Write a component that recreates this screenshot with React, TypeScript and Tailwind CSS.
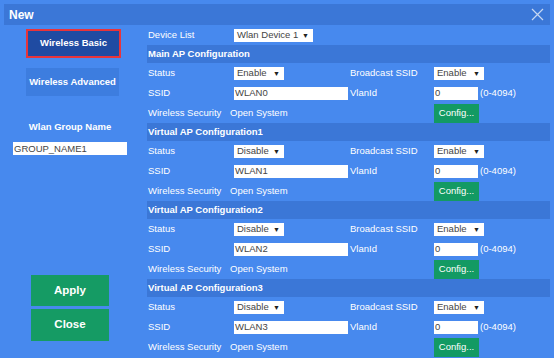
import React from 'react'

const font = { fontFamily: '"Liberation Sans", Arial, sans-serif' }

type Section = {
  title: string
  status: string
  ssid: string
}

const sections: Section[] = [
  { title: 'Main AP Configuration', status: 'Enable', ssid: 'WLAN0' },
  { title: 'Virtual AP Configuration1', status: 'Disable', ssid: 'WLAN1' },
  { title: 'Virtual AP Configuration2', status: 'Disable', ssid: 'WLAN2' },
  { title: 'Virtual AP Configuration3', status: 'Disable', ssid: 'WLAN3' },
]

function Select({ value, wide }: { value: string; wide?: boolean }) {
  return (
    <div
      className={`flex h-[13px] items-center justify-between bg-white pl-[3px] pr-[4px] text-[#444] ${
        wide ? 'w-[79px]' : 'w-[50px]'
      }`}
    >
      <span className="leading-none">{value}</span>
      <span className="text-[7px] leading-none text-[#222]">▼</span>
    </div>
  )
}

function TextBox({ value, className }: { value: string; className: string }) {
  return (
    <div className={`flex h-[13px] items-center bg-white pl-[1px] text-[#444] ${className}`}>
      <span className="leading-none">{value}</span>
    </div>
  )
}

function ApSection({ s }: { s: Section }) {
  return (
    <div>
      <div className="flex h-[18px] items-center bg-[#3b77d7] pl-[1px] font-bold text-white">{s.title}</div>
      <div className="grid h-[20px] grid-cols-[87px_116px_84px_1fr] items-center">
        <span className="pl-[1px]">Status</span>
        <Select value={s.status} />
        <span>Broadcast SSID</span>
        <Select value="Enable" />
      </div>
      <div className="grid h-[20px] grid-cols-[87px_116px_84px_1fr] items-center">
        <span className="pl-[1px]">SSID</span>
        <TextBox value={s.ssid} className="w-[114px]" />
        <span>VlanId</span>
        <div className="flex items-center gap-[2px]">
          <TextBox value="0" className="w-[44px]" />
          <span>(0-4094)</span>
        </div>
      </div>
      <div className="grid h-[20px] grid-cols-[87px_116px_84px_1fr] items-end">
        <span className="self-center whitespace-nowrap pl-[1px]">Wireless Security</span>
        <span className="-ml-[4px] self-center">Open System</span>
        <span />
        <button className="flex h-[19px] w-[45px] items-center justify-center bg-[#139a63] text-white">
          Config...
        </button>
      </div>
    </div>
  )
}

export default function App() {
  return (
    <div className="h-[358px] w-[554px] overflow-hidden bg-[#4789ee] px-[4px] pt-[4px] text-[9.5px] text-white" style={font}>
      <div className="flex h-[21px] items-center justify-between bg-[#3b77d7] pl-[5px] pr-[5px]">
        <span className="text-[12px] font-bold">New</span>
        <svg width="13" height="13" viewBox="0 0 13 13" className="mr-[1px]">
          <path d="M1 1 L12 12 M12 1 L1 12" stroke="#c6d7f2" strokeWidth="1.2" fill="none" />
        </svg>
      </div>

      <div className="flex">
        <div className="flex w-[143px] flex-col items-start">
          <button className="ml-[22px] mt-[4px] flex h-[29px] w-[95px] items-center justify-center border-2 border-[#e8343a] bg-[#1f4ba2] font-bold text-white">
            Wireless Basic
          </button>
          <button className="ml-[22px] mt-[10px] flex h-[28px] w-[93px] items-center justify-center bg-[#3d7ddf] font-bold text-white">
            Wireless Advanced
          </button>
          <div className="ml-[9px] mt-[24px] w-[114px] text-center font-bold leading-[14px]">Wlan Group Name</div>
          <TextBox value="GROUP_NAME1" className="ml-[9px] mt-[8px] w-[114px]" />
          <button className="ml-[27px] mt-[120px] flex h-[31px] w-[78px] items-center justify-center bg-[#159b64] text-[11.5px] font-bold text-white">
            Apply
          </button>
          <button className="ml-[27px] mt-[3px] flex h-[32px] w-[78px] items-center justify-center bg-[#159b64] text-[11.5px] font-bold text-white">
            Close
          </button>
        </div>

        <div className="flex-1">
          <div className="grid h-[20px] grid-cols-[87px_1fr] items-center">
            <span className="pl-[1px]">Device List</span>
            <Select value="Wlan Device 1" wide />
          </div>
          {sections.map((s) => (
            <ApSection key={s.title} s={s} />
          ))}
        </div>
      </div>
    </div>
  )
}
